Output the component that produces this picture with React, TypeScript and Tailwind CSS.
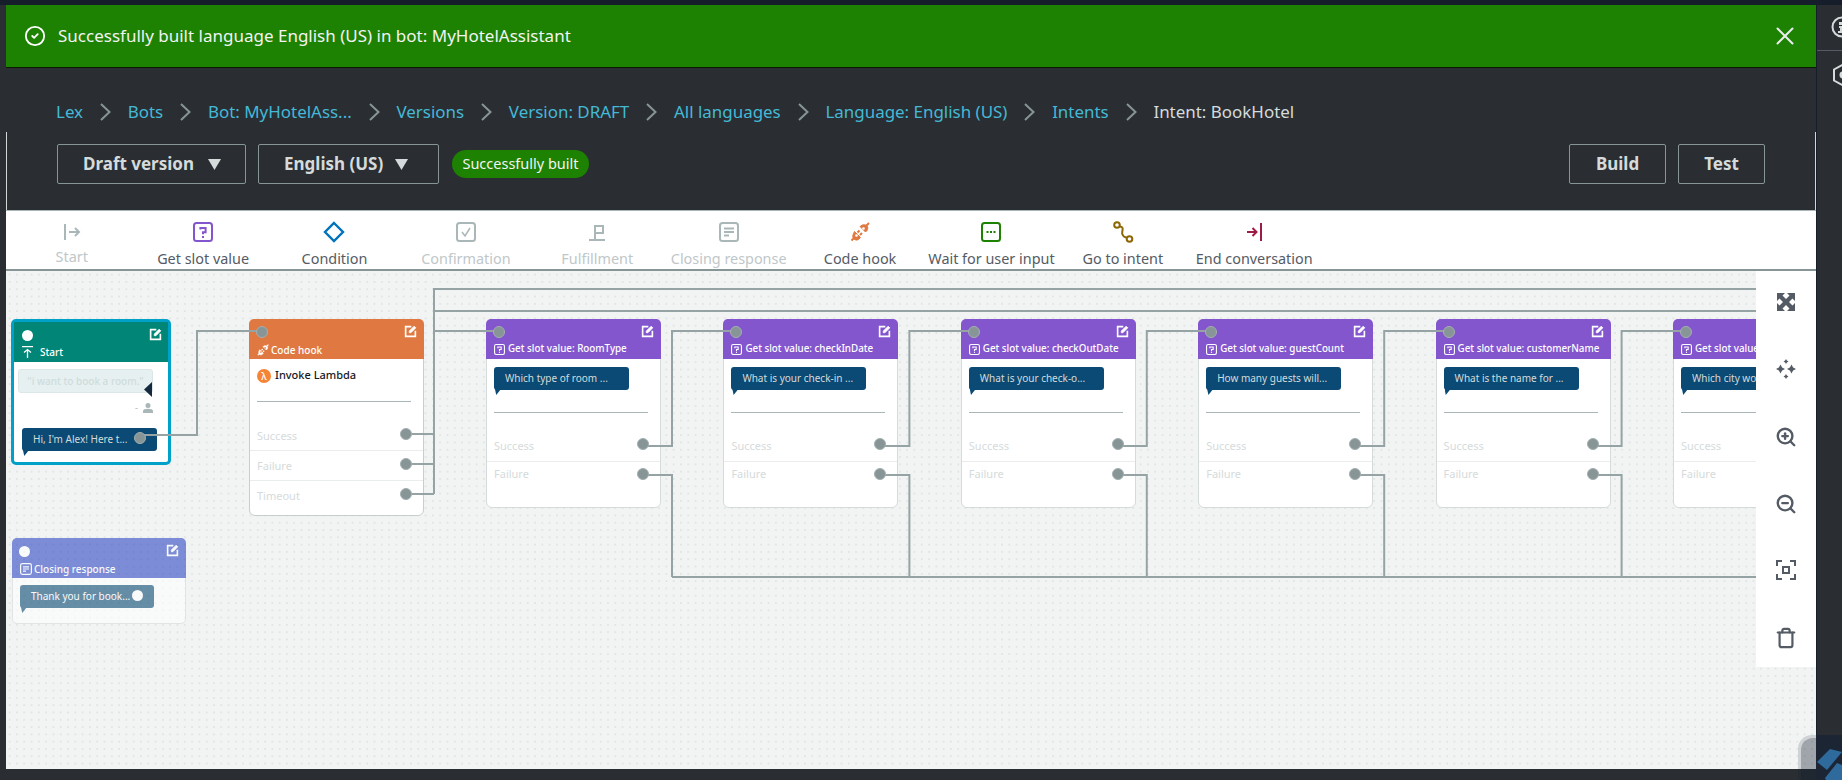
import React from "react";
import { CircleCheck, X, ZoomIn, ZoomOut, Trash } from "lucide-react";

const FONT = "font-['Noto_Sans',sans-serif]";

function Chevron() {
  return (
    <svg width="11" height="18" viewBox="0 0 11 18" className="mx-[16.850px] shrink-0">
      <path d="M1 1l8.5 8L1 17" fill="none" stroke="#879596" strokeWidth="2" />
    </svg>
  );
}

function Caret() {
  return (
    <svg width="13" height="11" viewBox="0 0 13 11" className="shrink-0">
      <path d="M0 0h13L6.5 11z" fill="#d5dbdb" />
    </svg>
  );
}

const crumbs = ["Lex", "Bots", "Bot: MyHotelAss...", "Versions", "Version: DRAFT", "All languages", "Language: English (US)", "Intents"];

function Breadcrumbs() {
  return (
    <div className="flex items-center h-[24px] -ml-px text-[16.950px] leading-[24px] whitespace-nowrap">
      {crumbs.map((c) => (
        <React.Fragment key={c}>
          <span className="text-[#44b9d6]">{c}</span>
          <Chevron />
        </React.Fragment>
      ))}
      <span className="text-[#d5dbdb]">Intent: BookHotel</span>
    </div>
  );
}

const IconStart = () => (
  <svg width="20" height="20" viewBox="0 0 20 20" fill="none" stroke="#aab7b8" strokeWidth="2">
    <path d="M3 2v16" />
    <path d="M7 10h10M13 6l4 4-4 4" />
  </svg>
);
const IconSlot = ({ c = "#8456ce", w = 2 }: { c?: string; w?: number }) => (
  <svg width="20" height="20" viewBox="0 0 20 20" fill="none">
    <rect x="1" y="1" width="18" height="18" rx="2.5" stroke={c} strokeWidth={w} />
    <path d="M7.4 7.6V6h5.2v4.2H10v2" stroke={c} strokeWidth="2" />
    <path d="M9 14h2v2H9z" fill={c} />
  </svg>
);
const IconCondition = () => (
  <svg width="22" height="22" viewBox="0 0 22 22" fill="none">
    <path d="M11 2l9 9-9 9-9-9z" stroke="#0073bb" strokeWidth="2.4" />
  </svg>
);
const IconConfirm = () => (
  <svg width="20" height="20" viewBox="0 0 20 20" fill="none">
    <rect x="1" y="1" width="18" height="18" rx="2.5" stroke="#aab7b8" strokeWidth="2" />
    <path d="M6 10l3 4 5-8" stroke="#aab7b8" strokeWidth="1.5" />
  </svg>
);
const IconFulfil = () => (
  <svg width="20" height="20" viewBox="0 0 20 20" fill="none" stroke="#aab7b8" strokeWidth="2">
    <path d="M2 18h16M8 18V3M8 4h8v7H8" />
  </svg>
);
const IconClosing = ({ c = "#aab7b8", w = 2 }: { c?: string; w?: number }) => (
  <svg width="20" height="20" viewBox="0 0 20 20" fill="none" stroke={c} strokeWidth={w}>
    <rect x="1" y="1" width="18" height="18" rx="2.5" />
    <path d="M5 6.5h10M5 10h10M5 13.5h5" strokeWidth="1.8" />
  </svg>
);
const IconPlug = ({ c = "#e07941", s = 20, hole = "#fff" }: { c?: string; s?: number; hole?: string }) => (
  <svg width={s} height={s} viewBox="0 0 20 20" fill="none" stroke={c} strokeWidth="2">
    <path d="M1.5 18.500L4.500 15.500M7.500 10.500l2-2M10 13l2-2M16 4L19 1" />
    <path d="M4.500 9.500l6 6-2 2c-1.500 1-3.500.5-4.500-.5S2.500 14.500 3 13z" fill={c} strokeWidth="1" />
    <path d="M10 4.500l5.500 5.500 1.500-1.500c1-1.500 1-3.500 0-4.500s-3-1.500-4.500-1z" fill={c} strokeWidth="1" />
    <circle cx="6.500" cy="13.500" r="1.300" fill={hole} stroke="none" />
    <circle cx="13.500" cy="6.500" r="1.300" fill={hole} stroke="none" />
  </svg>
);
const IconWait = () => (
  <svg width="20" height="20" viewBox="0 0 20 20" fill="none">
    <rect x="1" y="1" width="18" height="18" rx="2.5" stroke="#1d8102" strokeWidth="2" />
    <path d="M5.500 9h2v2h-2zM9 9h2v2H9zM12.500 9h2v2h-2z" fill="#1d8102" />
  </svg>
);
const IconGoto = () => (
  <svg width="22" height="22" viewBox="0 0 22 22" fill="none" stroke="#8d6605" strokeWidth="2">
    <circle cx="5" cy="4" r="2.800" />
    <circle cx="17.500" cy="18" r="2.800" />
    <path d="M7.500 5.500c3 0 3.500 1.500 3 4s-1 3 .5 5 2.500 1.500 3.500 2" />
  </svg>
);
const IconEnd = () => (
  <svg width="20" height="20" viewBox="0 0 20 20" fill="none" stroke="#9e1b47" strokeWidth="2">
    <path d="M17 1v18" />
    <path d="M3 10h9M8.500 6l4 4-4 4" />
  </svg>
);

const tools: { label: string; icon: React.ReactNode; off?: boolean }[] = [
  { label: "Start", icon: <IconStart />, off: true },
  { label: "Get slot value", icon: <IconSlot /> },
  { label: "Condition", icon: <IconCondition /> },
  { label: "Confirmation", icon: <IconConfirm />, off: true },
  { label: "Fulfillment", icon: <IconFulfil />, off: true },
  { label: "Closing response", icon: <IconClosing />, off: true },
  { label: "Code hook", icon: <IconPlug /> },
  { label: "Wait for user input", icon: <IconWait /> },
  { label: "Go to intent", icon: <IconGoto /> },
  { label: "End conversation", icon: <IconEnd /> },
];

function Toolbar() {
  return (
    <div className="flex h-[61px] shrink-0 bg-white border-b-2 border-[#879596] border-t border-t-[#aab7b8]">
      {tools.map((t) => (
        <div key={t.label} className="w-[131.4px] shrink-0 flex flex-col items-center pt-[11px]">
          <div className="h-[20px] flex items-center justify-center">{t.icon}</div>
          <span
            className={
              "text-[14.400px] leading-[20px] whitespace-nowrap " +
              (t.off ? "text-[#c0c7c9] " : "text-[#545b64] ") +
              (t.label === "Start" ? "mt-[5px]" : "mt-[7px]")
            }
          >
            {t.label}
          </span>
        </div>
      ))}
    </div>
  );
}

function Port({ className }: { className: string }) {
  return <div className={"absolute z-20 w-[12px] h-[12px] rounded-full bg-[#879596] border border-[#a3afb0] " + className} />;
}

function Bubble({ text, className, tail }: { text: string; className: string; tail: string }) {
  return (
    <div className={"relative h-[23px] rounded-[3px] flex items-center pl-[11px] text-[10px] whitespace-nowrap " + className}>
      {text}
      <div className={"absolute left-[1px] top-[22px] w-[6px] h-[6px] [clip-path:polygon(0_0,100%_0,20%_100%)] " + tail} />
    </div>
  );
}

function Edit({ className }: { className: string }) {
  return (
    <svg width="13" height="13" viewBox="0 0 16 16" fill="none" stroke="#fff" strokeWidth="2" className={"absolute " + className}>
      <path d="M9 2H2v12h12V7" />
      <path d="M6.500 9.500V7.500L12.500 1.500l2 2-6 6z" fill="#fff" strokeWidth="1" />
    </svg>
  );
}

function SlotCard({ x, name, prompt }: { x: number; name: string; prompt: string }) {
  return (
    <div
      className="absolute top-[48px] w-[175px] h-[189px] bg-white rounded-[6px] border border-[#d5dbdb] overflow-visible"
      style={{ left: x - 6 }}
    >
      <div className="relative h-[40px] -m-px bg-[#8456ce] rounded-t-[5px] flex items-end pb-[3px] pl-[8px]">
        <span className="flex items-center gap-[3px] text-[9.8px] font-medium leading-[14px] text-white whitespace-nowrap">
          <span className="inline-flex w-[11px] h-[11px]">
            <svg width="11" height="11" viewBox="0 0 20 20" fill="none">
              <rect x="1" y="1" width="18" height="18" rx="3" stroke="#fff" strokeWidth="2" />
              <path d="M7 7.500V5.500h6V10h-3v2.500" stroke="#fff" strokeWidth="2" />
              <path d="M9 14h2v2.200H9z" fill="#fff" />
            </svg>
          </span>
          {name}
        </span>
        <Edit className="right-[7px] top-[6px]" />
      </div>
      <div className="px-[7px] pt-[9px]">
        <Bubble text={prompt} className="w-[135px] bg-[#0a4a74] text-[#d5dbdb]" tail="bg-[#0a4a74]" />
        <div className="h-px w-[154px] bg-[#aab7b8] mt-[22px]" />
      </div>
      <div className="h-[49px] border-b border-[#eaeded] pl-[7px] flex items-end pb-[8px] text-[11px] leading-[14px] text-[#d5dbdb]">Success</div>
      <div className="pl-[7px] pt-[5px] text-[11px] leading-[14px] text-[#d5dbdb]">Failure</div>
      <Port className="left-[6px] top-[6px]" />
      <Port className="left-[150px] top-[118px]" />
      <Port className="left-[150px] top-[148px]" />
    </div>
  );
}

function CodeHookCard() {
  return (
    <div className="absolute left-[243px] top-[48px] w-[175px] h-[197px] bg-white rounded-[6px] border border-[#c6cece]">
      <div className="relative h-[40px] -m-px bg-[#e07941] rounded-t-[5px] flex items-end pb-[2px] pl-[8px]">
        <span className="flex items-center gap-[2px] text-[10px] font-medium leading-[14px] text-white whitespace-nowrap">
          <IconPlug c="#fff" s={12} hole="#e07941" />
          Code hook
        </span>
        <Edit className="right-[7px] top-[6px]" />
      </div>
      <div className="flex items-center gap-[4px] pl-[7px] pt-[6px] h-[29px] text-[11px] font-medium text-[#16191f]">
        <span className="w-[14px] h-[14px] rounded-full bg-[#f58534] text-white text-[10px] leading-[14px] text-center">λ</span>
        Invoke Lambda
      </div>
      <div className="h-px w-[154px] ml-[7px] bg-[#aab7b8] mt-[14px]" />
      <div className="h-[49px] border-b border-[#eaeded] pl-[7px] flex items-end pb-[7px] text-[11px] leading-[14px] text-[#d5dbdb]">Success</div>
      <div className="h-[30px] border-b border-[#eaeded] pl-[7px] flex items-center text-[11px] leading-[14px] text-[#d5dbdb]">Failure</div>
      <div className="h-[29px] pl-[7px] flex items-center text-[11px] leading-[14px] text-[#d5dbdb]">Timeout</div>
      <Port className="left-[6px] top-[6px]" />
      <Port className="left-[150px] top-[108px]" />
      <Port className="left-[150px] top-[138px]" />
      <Port className="left-[150px] top-[168px]" />
    </div>
  );
}

function StartCard() {
  return (
    <div className="absolute left-[5px] top-[48px] w-[160px] h-[146px] bg-white rounded-[5px] border-[3px] border-[#00a1c9]">
      <div className="relative h-[40px] bg-[#008577] flex items-end pb-[3px] pl-[8px]">
        <span className="flex items-center gap-[7px] text-[10px] leading-[14px] text-white font-medium">
          <svg width="11" height="12" viewBox="0 0 11 12" fill="none" stroke="#fff" strokeWidth="1.300">
            <path d="M0 .7h11M5.500 12V3.500M2 6.500l3.500-3 3.500 3" />
          </svg>
          Start
        </span>
        <div className="absolute left-[8px] top-[8px] w-[11px] h-[11px] rounded-full bg-white" />
        <Edit className="right-[6px] top-[6px]" />
      </div>
      <div className="relative px-[4px] pt-[7px]">
        <div className="w-[135px] h-[24px] rounded-[3px] bg-[#e6f0f0] border border-[#dbe6e6] flex items-center justify-center text-[10px] font-medium text-[#cfdcdc] whitespace-nowrap">
          "i want to book a room."
        </div>
        <div className="absolute left-[130px] top-[20px] w-[8px] h-[15px] bg-[#16293f] [clip-path:polygon(0_50%,100%_0,100%_100%)]" />
        <div className="flex items-center justify-end gap-[5px] h-[14px] mt-[8px] pr-[11px] text-[9px] text-[#aab7b8]">
          <span>-</span>
          <svg width="10" height="10" viewBox="0 0 10 10" fill="#aab7b8">
            <circle cx="5" cy="2.600" r="2.500" />
            <path d="M0 10V8.200C0 6.500 2 5.800 5 5.800s5 .7 5 2.400V10z" />
          </svg>
        </div>
        <div className="relative pl-[4px] mt-[13px]">
          <Bubble text="Hi, I'm Alex! Here t..." className="w-[135px] bg-[#0a4a74] text-[#d5dbdb]" tail="bg-[#0a4a74]" />
        </div>
      </div>
      <Port className="left-[120px] top-[110px]" />
    </div>
  );
}

function ClosingCard() {
  return (
    <div className="absolute left-[6px] top-[267px] w-[174px] h-[86px] bg-white rounded-[5px] border border-[#d5dbdb] opacity-60">
      <div className="relative h-[40px] -m-px bg-[#2e49c4] rounded-t-[5px] flex items-end pb-[2px] pl-[8px]">
        <span className="flex items-center gap-[2px] text-[10px] leading-[14px] text-white font-medium whitespace-nowrap">
          <svg width="12" height="12" viewBox="0 0 20 20" fill="none" stroke="#fff" strokeWidth="2">
            <rect x="1" y="1" width="18" height="18" rx="3" />
            <path d="M5 6.500h10M5 10h10M5 13.500h5" />
          </svg>
          Closing response
        </span>
        <div className="absolute left-[7px] top-[8px] w-[11px] h-[11px] rounded-full bg-white" />
        <Edit className="right-[7px] top-[6px]" />
      </div>
      <div className="relative px-[7px] pt-[8px]">
        <Bubble text="Thank you for book..." className="w-[134px] bg-[#0a4a74] text-white" tail="bg-[#0a4a74]" />
        <div className="absolute left-[119px] top-[13px] w-[11px] h-[11px] rounded-full bg-white" />
      </div>
    </div>
  );
}

const slots = [
  { x: 486, name: "Get slot value: RoomType", prompt: "Which type of room ..." },
  { x: 723.4, name: "Get slot value: checkInDate", prompt: "What is your check-in ..." },
  { x: 960.8, name: "Get slot value: checkOutDate", prompt: "What is your check-o..." },
  { x: 1198.2, name: "Get slot value: guestCount", prompt: "How many guests will..." },
  { x: 1435.6, name: "Get slot value: customerName", prompt: "What is the name for ..." },
  { x: 1673, name: "Get slot value: City", prompt: "Which city would you ..." },
];

function Wires() {
  const step = 237.4;
  const wires: string[] = [
    "M140 435H197V331H262",
    "M406 434H434M406 464H434M406 494H434",
    "M434 494V289H1816",
    "M434 311H1816",
    "M434 331H499",
    "M672 577H1816",
  ];
  for (let i = 0; i < 5; i++) {
    const dx = i * step;
    wires.push(`M${643 + dx} 446H${672 + dx}V331H${737 + dx}`);
    wires.push(`M${643 + dx} 475H${672 + dx}V577`);
  }
  return (
    <svg className="absolute left-0 top-0 z-10 pointer-events-none" width="1810" height="498" viewBox="6 271 1810 498" fill="none">
      {wires.map((d) => (
        <path key={d} d={d} stroke="#95a3a4" strokeWidth="2" />
      ))}
    </svg>
  );
}

function ExpandIcon() {
  return (
    <svg width="20" height="20" viewBox="0 0 20 20" fill="#545b64" stroke="none">
      <path d="M1 1h8L6.500 3.500 10 7l3.500-3.500L11 1h8v8l-2.500-2.500L13 10l3.500 3.500L19 11v8h-8l2.500-2.500L10 13l-3.500 3.500L9 19H1v-8l2.500 2.500L7 10 3.500 6.500 1 9z" />
    </svg>
  );
}
function SparkIcon() {
  return (
    <svg width="20" height="20" viewBox="0 0 20 20" fill="#545b64">
      <path d="M10 0l.9 1.600L12.500 2.500l-1.600.9L10 5l-.9-1.600-1.600-.9 1.600-.9zM10 15l.9 1.600 1.600.9-1.600.9L10 20l-.9-1.600-1.600-.9 1.600-.9z" />
      <path d="M4.500 5.500l1.600 2.900 2.900 1.600-2.900 1.600-1.600 2.900-1.600-2.900L0 10l2.900-1.600zM15.500 5.500l1.600 2.900L20 10l-2.900 1.600-1.600 2.900-1.600-2.900L11 10l2.900-1.600z" />
    </svg>
  );
}
function FocusIcon() {
  return (
    <svg width="20" height="20" viewBox="0 0 20 20" fill="none" stroke="#545b64" strokeWidth="2">
      <path d="M1 6V1h5M14 1h5v5M19 14v5h-5M6 19H1v-5" />
      <rect x="7" y="7" width="6" height="6" />
    </svg>
  );
}

function CanvasTools() {
  return (
    <div className="absolute right-0 top-0 z-30 w-[60px] h-[396px] bg-white flex flex-col items-center pt-[21px]">
      <div className="h-[67px]"><ExpandIcon /></div>
      <div className="h-[67px]"><SparkIcon /></div>
      <div className="h-[67px]"><ZoomIn size={22} color="#545b64" strokeWidth={2.600} /></div>
      <div className="h-[67px]"><ZoomOut size={22} color="#545b64" strokeWidth={2.600} /></div>
      <div className="h-[67px]"><FocusIcon /></div>
      <div className="h-[22px]"><Trash size={22} color="#545b64" strokeWidth={2.400} /></div>
    </div>
  );
}

function Canvas() {
  return (
    <div className="relative isolate flex-1 overflow-hidden bg-[#f2f3f3] bg-[radial-gradient(#e1e5e5_1px,transparent_1.2px)] bg-[size:7.300px_7.300px]">
      <StartCard />
      <CodeHookCard />
      {slots.map((s) => (
        <SlotCard key={s.x} {...s} />
      ))}
      <ClosingCard />
      <Wires />
      <CanvasTools />
    </div>
  );
}

export default function App() {
  return (
    <div className={"relative w-[1842px] h-[780px] overflow-hidden bg-[#2a2e33] flex flex-col " + FONT}>
      <div className="h-[5px] shrink-0 bg-[#161d2b]" />
      <div className="flex flex-1 min-h-0">
        <div className="w-[6px] shrink-0" />
        <main className="w-[1810px] shrink-0 flex flex-col pb-[11px]">
          <div className="h-[63px] shrink-0 bg-[#1d8102] border-b border-[#0b1a05] flex items-center pl-[18px] pr-[16px] text-white">
            <CircleCheck size={22} strokeWidth={2} className="shrink-0" />
            <span className="ml-[12px] text-[17px] leading-[24px] text-[#f2f3f3] flex-1">Successfully built language English (US) in bot: MyHotelAssistant</span>
            <X size={30} strokeWidth={1.600} color="#eaeded" className="shrink-0" />
          </div>
          <div className="relative h-[142px] shrink-0 bg-[#2a2e33] px-[51px] pt-[32px] flex flex-col gap-[20px]">
            <div className="absolute left-0 top-[64px] bottom-0 w-px bg-white/80" />
            <div className="absolute right-0 top-[64px] bottom-0 w-px bg-white/80" />
            <Breadcrumbs />
            <div className="flex items-center">
              <button className="h-[40px] w-[189px] border border-[#879596] rounded-[2px] flex items-center pl-[25px] gap-[14px] text-[17px] font-bold text-[#d5dbdb]">
                Draft version <Caret />
              </button>
              <button className="ml-[12px] h-[40px] w-[181px] border border-[#879596] rounded-[2px] flex items-center pl-[25px] gap-[12px] text-[17px] font-bold text-[#d5dbdb]">
                English (US) <Caret />
              </button>
              <span className="ml-[13px] h-[28px] w-[137px] rounded-full bg-[#1d8102] flex items-center justify-center text-[14.500px] text-[#f2f3f3] whitespace-nowrap">Successfully built</span>
              <button className="ml-auto h-[40px] w-[97px] border border-[#879596] rounded-[2px] text-[17px] font-bold text-[#d5dbdb]">Build</button>
              <button className="ml-[12px] h-[40px] w-[87px] border border-[#879596] rounded-[2px] text-[17px] font-bold text-[#d5dbdb]">Test</button>
            </div>
          </div>
          <Toolbar />
          <Canvas />
        </main>
        <aside className="flex-1 overflow-hidden border-l border-[#161d2b]">
          <div className="h-[46px] border-b border-[#545b64] flex items-center pl-[14px]">
            <svg width="22" height="22" viewBox="0 0 22 22" fill="none" className="shrink-0 mt-[-1px]">
              <circle cx="11" cy="11" r="9.500" stroke="#d5dbdb" strokeWidth="2" />
              <path d="M8 6h5v3H8zM8 10h5v5h2v2H7v-2h2v-3H8z" fill="#d5dbdb" />
            </svg>
          </div>
          <div className="pl-[15px] pt-[12px]">
            <svg width="22" height="24" viewBox="0 0 22 24" fill="none">
              <path d="M11 1.500l9 5v11l-9 5-9-5v-11z" stroke="#d5dbdb" strokeWidth="2" />
              <circle cx="11" cy="12" r="3.500" fill="#d5dbdb" />
            </svg>
          </div>
        </aside>
      </div>
      <div className="absolute left-[1798px] top-[735px] w-[60px] h-[60px] rounded-tl-[14px] bg-[#0f1a30]/15 p-[3px]">
        <div className="w-full h-full rounded-tl-[12px] bg-[#0f1a30]/25" />
      </div>
      <svg className="absolute left-[1816px] top-[735px]" width="26" height="45" viewBox="0 0 26 45">
        <path d="M0 0h26v45H0z" fill="#1c2534" />
        <path d="M1 27L14 14l12 3-15 18z" fill="#2f6a9c" />
        <path d="M9 43l12-15 5 2v15H10z" fill="#2f6a9c" />
      </svg>
    </div>
  );
}
